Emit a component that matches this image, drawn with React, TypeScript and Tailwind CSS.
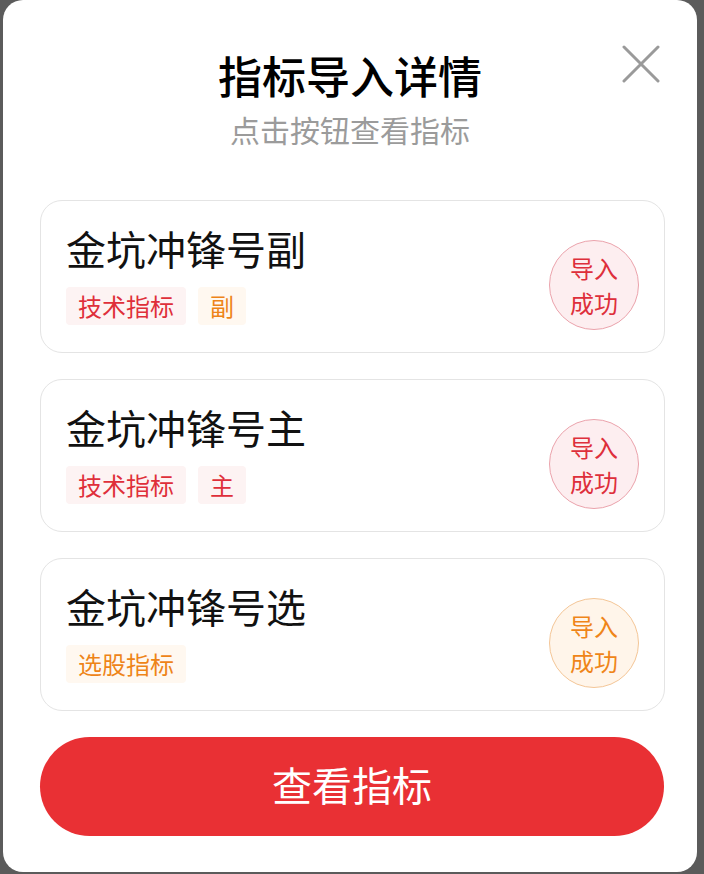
import React from "react";

type Tag = { label: string; tone: "red" | "orange" };
type Item = { name: string; tags: Tag[]; tone: "red" | "orange" };

const ITEMS: Item[] = [
  { name: "金坑冲锋号副", tags: [{ label: "技术指标", tone: "red" }, { label: "副", tone: "orange" }], tone: "red" },
  { name: "金坑冲锋号主", tags: [{ label: "技术指标", tone: "red" }, { label: "主", tone: "red" }], tone: "red" },
  { name: "金坑冲锋号选", tags: [{ label: "选股指标", tone: "orange" }], tone: "orange" },
];

const FONT = "font-['Noto_Sans_CJK_SC','Noto_Sans',sans-serif]";

export default function App() {
  return (
    <div className={`w-[704px] h-[874px] bg-[#5b5b5b] overflow-hidden pl-[3px] ${FONT}`}>
      <div className="relative w-[694px] h-[872px] bg-white rounded-[20px] flex flex-col">
        {/* close */}
        <button className="absolute left-[618px] top-[44px] w-[40px] h-[40px] flex items-center justify-center">
          <svg width="38" height="38" viewBox="0 0 38 38" fill="none">
            <path d="M2 2 L36 36 M36 2 L2 36" stroke="#9a9a9a" strokeWidth="3" strokeLinecap="round" />
          </svg>
        </button>

        <div className="pt-[46px] flex flex-col items-center">
          <h1 className="text-[44px] leading-[58px] font-medium text-black">指标导入详情</h1>
          <p className="mt-[5px] text-[30px] leading-[40px] text-[#9b9b9b]">点击按钮查看指标</p>
        </div>

        <div className="mt-[51px] ml-[37px] w-[625px] flex flex-col gap-[26px]">
          {ITEMS.map(item => (
            <div key={item.name}
              className="h-[153px] rounded-[22px] border border-[#e4e4e4] flex items-center justify-between pl-[25px] pr-[25px]">
              <div className="self-start pt-[21px]">
                <div className="text-[40px] leading-[52px] text-[#111]">{item.name}</div>
                <div className="mt-[13px] flex gap-[12px]">
                  {item.tags.map(t => (
                    <span key={t.label}
                      className={`h-[38px] px-[12px] flex items-center text-[24px] rounded-[4px] ${t.tone === "red" ? "bg-[#fdf3f3] text-[#df2f3a]" : "bg-[#fff8f0] text-[#ee8418]"}`}>
                      {t.label}
                    </span>
                  ))}
                </div>
              </div>
              <div className={`mt-[16px] w-[90px] h-[90px] rounded-full border flex flex-col items-center justify-center text-[24px] leading-[35px] ${item.tone === "red" ? "bg-[#fdeef0] border-[#eba3ac] text-[#de2f3b]" : "bg-[#fff5ea] border-[#f4c697] text-[#ef8519]"}`}>
                <span>导入</span>
                <span>成功</span>
              </div>
            </div>
          ))}
        </div>

        <button className="mt-[26px] ml-[37px] w-[624px] h-[99px] pb-[6px] rounded-full bg-[#e93034] text-white text-[40px] leading-[52px]">
          查看指标
        </button>
      </div>
    </div>
  );
}
